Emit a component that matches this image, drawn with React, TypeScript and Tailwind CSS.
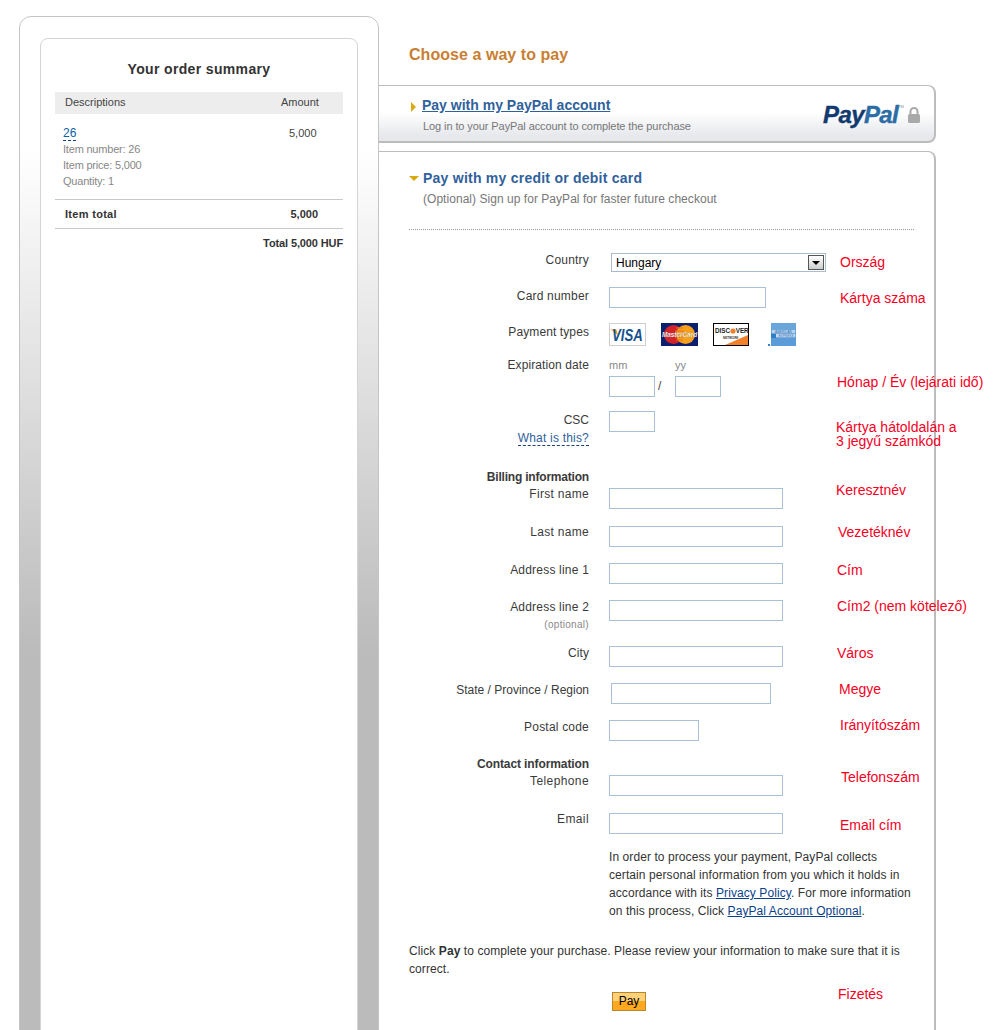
import React from "react";

function Red({ className = "", children }: { className?: string; children: React.ReactNode }) {
  return <div className={"text-[14px] leading-[16px] text-[#f5001e] whitespace-nowrap " + className}>{children}</div>;
}

function Label({ className = "", children }: { className?: string; children: React.ReactNode }) {
  return <div className={"w-[180px] shrink-0 pt-[1px] text-right text-[12px] leading-[14px] text-[#3a3a3a] " + className}>{children}</div>;
}

function Field({ className = "", children }: { className?: string; children?: React.ReactNode }) {
  return <div className={"ml-[20px] w-[227px] shrink-0 " + className}>{children}</div>;
}

function TextInput({ className = "" }: { className?: string }) {
  return <input type="text" className={"block h-[21px] border border-[#a9c0d9] bg-white outline-none " + className} />;
}

function Visa() {
  return (
    <svg width="37" height="23" viewBox="0 0 37 23">
      <rect x="0.5" y="0.5" width="36" height="22" fill="#fff" stroke="#cfcfcf" />
      <path d="M1 6.500h6.500l2 7.500C7.500 10.500 4.500 8 1 6.500z" fill="#f2a41f" />
      <text x="3" y="14.600" transform="scale(1 1.2)" fontFamily="'Liberation Sans'" fontWeight="bold" fontStyle="italic" fontSize="13.200" fill="#17528f">VISA</text>
    </svg>
  );
}

function Master() {
  return (
    <svg width="37" height="23" viewBox="0 0 37 23">
      <rect width="37" height="23" fill="#0a1f6e" />
      <circle cx="12.500" cy="11.500" r="9.500" fill="#d2232a" />
      <circle cx="24.500" cy="11.500" r="9.500" fill="#f7a11a" />
      <path d="M15 5h7M14 8h9M14 11h9M14 14h9M15 17h7" stroke="#e8701d" strokeWidth="1.200" />
      <text x="18.500" y="14" textAnchor="middle" fontFamily="'Liberation Sans'" fontWeight="bold" fontStyle="italic" fontSize="6.400" fill="#fff" stroke="#555" strokeWidth="0.120">MasterCard</text>
    </svg>
  );
}

function Discover() {
  return (
    <svg width="36" height="23" viewBox="0 0 36 23">
      <rect x="0.500" y="0.500" width="35" height="22" fill="#fff" stroke="#000" />
      <path d="M12 22L35 12v10z" fill="#f0812a" />
      <text x="2" y="10" fontFamily="'Liberation Sans'" fontWeight="bold" fontSize="6.300" fill="#222">DISC</text>
      <circle cx="20" cy="8" r="2.600" fill="#f0812a" />
      <text x="22.700" y="10" fontFamily="'Liberation Sans'" fontWeight="bold" fontSize="6.300" fill="#222">VER</text>
      <text x="10" y="16" fontFamily="'Liberation Sans'" fontWeight="bold" fontSize="3" fill="#333">NETWORK</text>
    </svg>
  );
}

function Amex() {
  return (
    <svg width="28" height="23" viewBox="0 0 28 23">
      <rect x="0" y="21" width="2" height="2" fill="#3b82c4" />
      <rect x="3" y="0" width="25" height="23" fill="#2f7fc8" />
      <rect x="3" y="0" width="25" height="7" fill="#68a6dc" />
      <rect x="3" y="15" width="25" height="8" fill="#5b9bd8" />
      <rect x="3.500" y="7" width="24" height="3.500" fill="#b7d3ee" />
      <rect x="8" y="11" width="19.500" height="3.500" fill="#c6dcf2" />
      <text x="15.500" y="10" textAnchor="middle" fontFamily="'Liberation Sans'" fontSize="3.200" fill="#2f6fb0">AMERICAN</text>
      <text x="18" y="14" textAnchor="middle" fontFamily="'Liberation Sans'" fontSize="3.200" fill="#2f6fb0">EXPRESS</text>
    </svg>
  );
}

function Lock() {
  return (
    <svg width="14" height="16" viewBox="0 0 14 16">
      <path d="M3.500 7V4.500a3.500 3.500 0 0 1 7 0V7" fill="none" stroke="#a9a9a9" strokeWidth="2" />
      <rect x="1" y="7" width="12" height="9" rx="1.500" fill="#a9a9a9" />
    </svg>
  );
}

export default function App() {
  return (
    <div className="w-[1000px] h-[1030px] overflow-hidden bg-white flex items-start font-['Liberation_Sans',Arial,sans-serif] text-[#333]">
      {/* order summary */}
      <div className="ml-[19px] mt-[16px] w-[360px] h-[1100px] shrink-0 border border-[#c4c4c4] rounded-t-[12px] pt-[21px] pl-[20px] bg-[linear-gradient(#fff_134px,#bbb_634px)]">
        <div className="w-[318px] h-[1100px] bg-white border border-[#d4d4d4] rounded-t-[8px] px-[14px] pt-[21px]">
          <h2 className="text-center text-[14px] leading-[18px] font-bold text-[#333] tracking-[0.35px]">Your order summary</h2>
          <div className="mt-[14px] h-[22px] bg-[#ededed] flex items-center pl-[10px] pb-[2px] text-[11px] text-[#444]">
            <span className="w-[216px]">Descriptions</span>
            <span>Amount</span>
          </div>
          <div className="h-[85px] flex pt-[12px] pl-[8px] text-[11px] leading-[16px]">
            <div className="w-[226px]">
              <a className="block w-fit text-[12px] leading-[14px] text-[#0a62a8] border-b border-dashed border-[#0a3f7a]">26</a>
              <div className="text-[#888] tracking-[-0.2px]">Item number: 26</div>
              <div className="text-[#888] tracking-[-0.2px]">Item price: 5,000</div>
              <div className="text-[#888] tracking-[-0.2px]">Quantity: 1</div>
            </div>
            <div className="text-[#444] leading-[14px]">5,000</div>
          </div>
          <div className="h-[30px] border-y border-[#c8c8c8] flex items-center justify-between pl-[10px] pr-[25px] text-[11px] font-bold text-[#333]">
            <span className="tracking-[0.3px]">Item total</span>
            <span>5,000</span>
          </div>
          <div className="mt-[7px] text-right text-[11px] leading-[14px] font-bold text-[#333] tracking-[-0.12px]">Total 5,000 HUF</div>
        </div>
      </div>

      {/* payment */}
      <div className="w-[557px] shrink-0">
        <h1 className="mt-[45px] ml-[30px] text-[16px] leading-[20px] font-bold text-[#c97f33] tracking-[0.05px]">Choose a way to pay</h1>

        <div className="mt-[20px] h-[58px] border-t border-r-2 border-b-2 border-[#bcbcbc] rounded-r-[8px] bg-[linear-gradient(#fff_26px,#e6e8ec_50px)] flex">
          <div className="pl-[32px] pt-[10px] w-[444px]">
            <div className="flex items-center">
              <span className="w-0 h-0 border-y-[5px] border-y-transparent border-l-[5px] border-l-[#d9a90f] mt-[3px]" />
              <a className="ml-[6px] text-[14px] leading-[18px] font-bold text-[#30619b] underline">Pay with my PayPal account</a>
            </div>
            <div className="ml-[12px] mt-[5px] text-[11px] leading-[14px] text-[#777] tracking-[-0.09px]">Log in to your PayPal account to complete the purchase</div>
          </div>
          <div className="flex items-center pt-[3px]">
            <span className="text-[24px] leading-[24px] font-bold italic tracking-[-0.6px] text-[#123a6e] [-webkit-text-stroke:0.4px_#123a6e]">Pay</span>
            <span className="text-[24px] leading-[24px] font-bold italic tracking-[-0.6px] text-[#2d6da6] [-webkit-text-stroke:0.4px_#2d6da6]">Pal</span>
            <span className="text-[4px] leading-[5px] self-start mt-[15px] text-[#888]">TM</span>
            <span className="ml-[3px] flex"><Lock /></span>
          </div>
        </div>

        <div className="mt-[8px] h-[1000px] border-t border-r-2 border-[#bcbcbc] rounded-tr-[8px]">
          <div className="pl-[30px] pt-[17px]">
            <div className="flex items-center">
              <span className="w-0 h-0 border-x-[5px] border-x-transparent border-t-[5px] border-t-[#d9a90f]" />
              <span className="ml-[4px] text-[14px] leading-[18px] font-bold text-[#30619b] tracking-[0.24px]">Pay with my credit or debit card</span>
            </div>
            <div className="ml-[14px] mt-[4px] text-[12px] leading-[16px] text-[#777] tracking-[0.04px]">(Optional) Sign up for PayPal for faster future checkout</div>
            <div className="mt-[22px] w-[505px] border-t border-dotted border-[#999]" />

            <div className="mt-[22px]">
              <div className="flex items-start h-[35px]">
                <Label className="tracking-[0.2px]">Country</Label>
                <Field className="mt-[1px] pl-[2px]">
                  <div className="w-[215px] h-[19px] border border-[#a9bcd0] flex items-center justify-between pl-[4px] pr-[1px] text-[12px] text-black">
                    <span>Hungary</span>
                    <span className="w-[16px] h-[15px] border border-[#555] bg-[linear-gradient(#fff,#ccc)] flex items-center justify-center">
                      <span className="w-0 h-0 border-x-[4px] border-x-transparent border-t-[4px] border-t-black" />
                    </span>
                  </div>
                </Field>
                <Red className="ml-[4px] mt-[2px]">Ország</Red>
              </div>

              <div className="flex items-start h-[36px]">
                <Label className="mt-[1px] tracking-[0.2px]">Card number</Label>
                <Field><TextInput className="w-[157px]" /></Field>
                <Red className="ml-[4px] mt-[3px]">Kártya száma</Red>
              </div>

              <div className="flex items-start h-[34px]">
                <Label className="mt-[1px] tracking-[0.1px]">Payment types</Label>
                <Field>
                  <div className="flex items-start">
                    <Visa />
                    <div className="ml-[15px] flex"><Master /></div>
                    <div className="ml-[15px] flex"><Discover /></div>
                    <div className="ml-[19px] flex"><Amex /></div>
                  </div>
                </Field>
              </div>

              <div className="flex items-start h-[54px]">
                <Label className="tracking-[0.1px]">Expiration date</Label>
                <Field>
                  <div className="flex text-[11px] leading-[14px] text-[#888] mt-[1px] h-[18px]">
                    <span className="w-[66px]">mm</span>
                    <span>yy</span>
                  </div>
                  <div className="flex items-start">
                    <TextInput className="w-[46px]" />
                    <span className="ml-[3px] w-[17px] text-[12px] leading-[21px] text-[#444]">/</span>
                    <TextInput className="w-[46px]" />
                  </div>
                </Field>
                <Red className="ml-[1px] mt-[17px]">Hónap / Év (lejárati idő)</Red>
              </div>

              <div className="flex items-start h-[58px]">
                <Label className="mt-[1px]">
                  CSC
                  <br />
                  <a className="inline-block mt-[4px] text-[#30619b] border-b border-dashed border-[#1c3f78] leading-[14px] tracking-[0.2px]">What is this?</a>
                </Label>
                <Field><TextInput className="w-[46px]" /></Field>
                <Red className="mt-[9px]">
                  <div className="leading-[14px]">
                    Kártya hátoldalán a
                    <br />
                    3 jegyű számkód
                  </div>
                </Red>
              </div>

              <div className="h-[13px]">
                <Label className="font-bold tracking-[-0.2px]">Billing information</Label>
              </div>

              <div className="flex items-start h-[42px]">
                <Label className="mt-[4px] tracking-[0.3px]">First name</Label>
                <Field className="mt-[6px]"><TextInput className="w-[174px]" /></Field>
                <Red>Keresztnév</Red>
              </div>

              <div className="flex items-start h-[38px]">
                <Label className="tracking-[0.3px]">Last name</Label>
                <Field className="mt-[2px]"><TextInput className="w-[174px]" /></Field>
                <Red className="ml-[2px]">Vezetéknév</Red>
              </div>

              <div className="flex items-start h-[36px]">
                <Label className="tracking-[0.2px]">Address line 1</Label>
                <Field className="mt-[1px]"><TextInput className="w-[174px]" /></Field>
                <Red className="ml-[1px]">Cím</Red>
              </div>

              <div className="flex items-start h-[47px]">
                <Label className="mt-[1px]">
                  <span className="tracking-[0.2px]">Address line 2</span>
                  <div className="mt-[5px] text-[10px] leading-[12px] text-[#888] tracking-[0.3px]">(optional)</div>
                </Label>
                <Field className="mt-[2px]"><TextInput className="w-[174px]" /></Field>
                <Red className="ml-[1px]">Cím2 (nem kötelező)</Red>
              </div>

              <div className="flex items-start h-[36px]">
                <Label className="tracking-[0.1px]">City</Label>
                <Field className="mt-[1px]"><TextInput className="w-[174px]" /></Field>
                <Red className="ml-[1px]">Város</Red>
              </div>

              <div className="flex items-start h-[36px]">
                <Label className="mt-[1px]">State / Province / Region</Label>
                <Field className="mt-[2px] pl-[2px]"><TextInput className="w-[160px]" /></Field>
                <Red className="ml-[3px]">Megye</Red>
              </div>

              <div className="flex items-start h-[39px]">
                <Label className="mt-[2px] tracking-[0.2px]">Postal code</Label>
                <Field className="mt-[3px]"><TextInput className="w-[90px]" /></Field>
                <Red className="ml-[4px]">Irányítószám</Red>
              </div>

              <div className="h-[13px]">
                <Label className="font-bold tracking-[-0.1px]">Contact information</Label>
              </div>

              <div className="flex items-start h-[42px]">
                <Label className="mt-[4px] tracking-[0.4px]">Telephone</Label>
                <Field className="mt-[6px]"><TextInput className="w-[174px]" /></Field>
                <Red className="ml-[5px]">Telefonszám</Red>
              </div>

              <div className="flex items-start h-[36px]">
                <Label className="tracking-[0.4px]">Email</Label>
                <Field className="mt-[2px]"><TextInput className="w-[174px]" /></Field>
                <Red className="ml-[4px] mt-[6px]">Email cím</Red>
              </div>
            </div>

            <p className="ml-[200px] mt-[1px] text-[12px] leading-[18px] text-[#333] whitespace-nowrap tracking-[0.08px]">
              In order to process your payment, PayPal collects
              <br />
              certain personal information from you which it holds in
              <br />
              accordance with its <a className="text-[#0a3f8a] underline">Privacy Policy</a>. For more information
              <br />
              on this process, Click <a className="text-[#0a3f8a] underline">PayPal Account Optional</a>.
            </p>

            <p className="mt-[22px] text-[12px] leading-[18px] text-[#333] whitespace-nowrap tracking-[0.08px]">
              Click <b>Pay</b> to complete your purchase. Please review your information to make sure that it is
              <br />
              correct.
            </p>

            <div className="mt-[8px] flex items-start">
              <button className="ml-[203px] mt-[6px] w-[34px] h-[19px] border border-[#b8862d] bg-[linear-gradient(#ffd27a_50%,#ffa820_50%)] text-[12px] leading-[15px] text-black">Pay</button>
              <Red className="ml-[192px]">Fizetés</Red>
            </div>
          </div>
        </div>
      </div>
    </div>
  );
}
